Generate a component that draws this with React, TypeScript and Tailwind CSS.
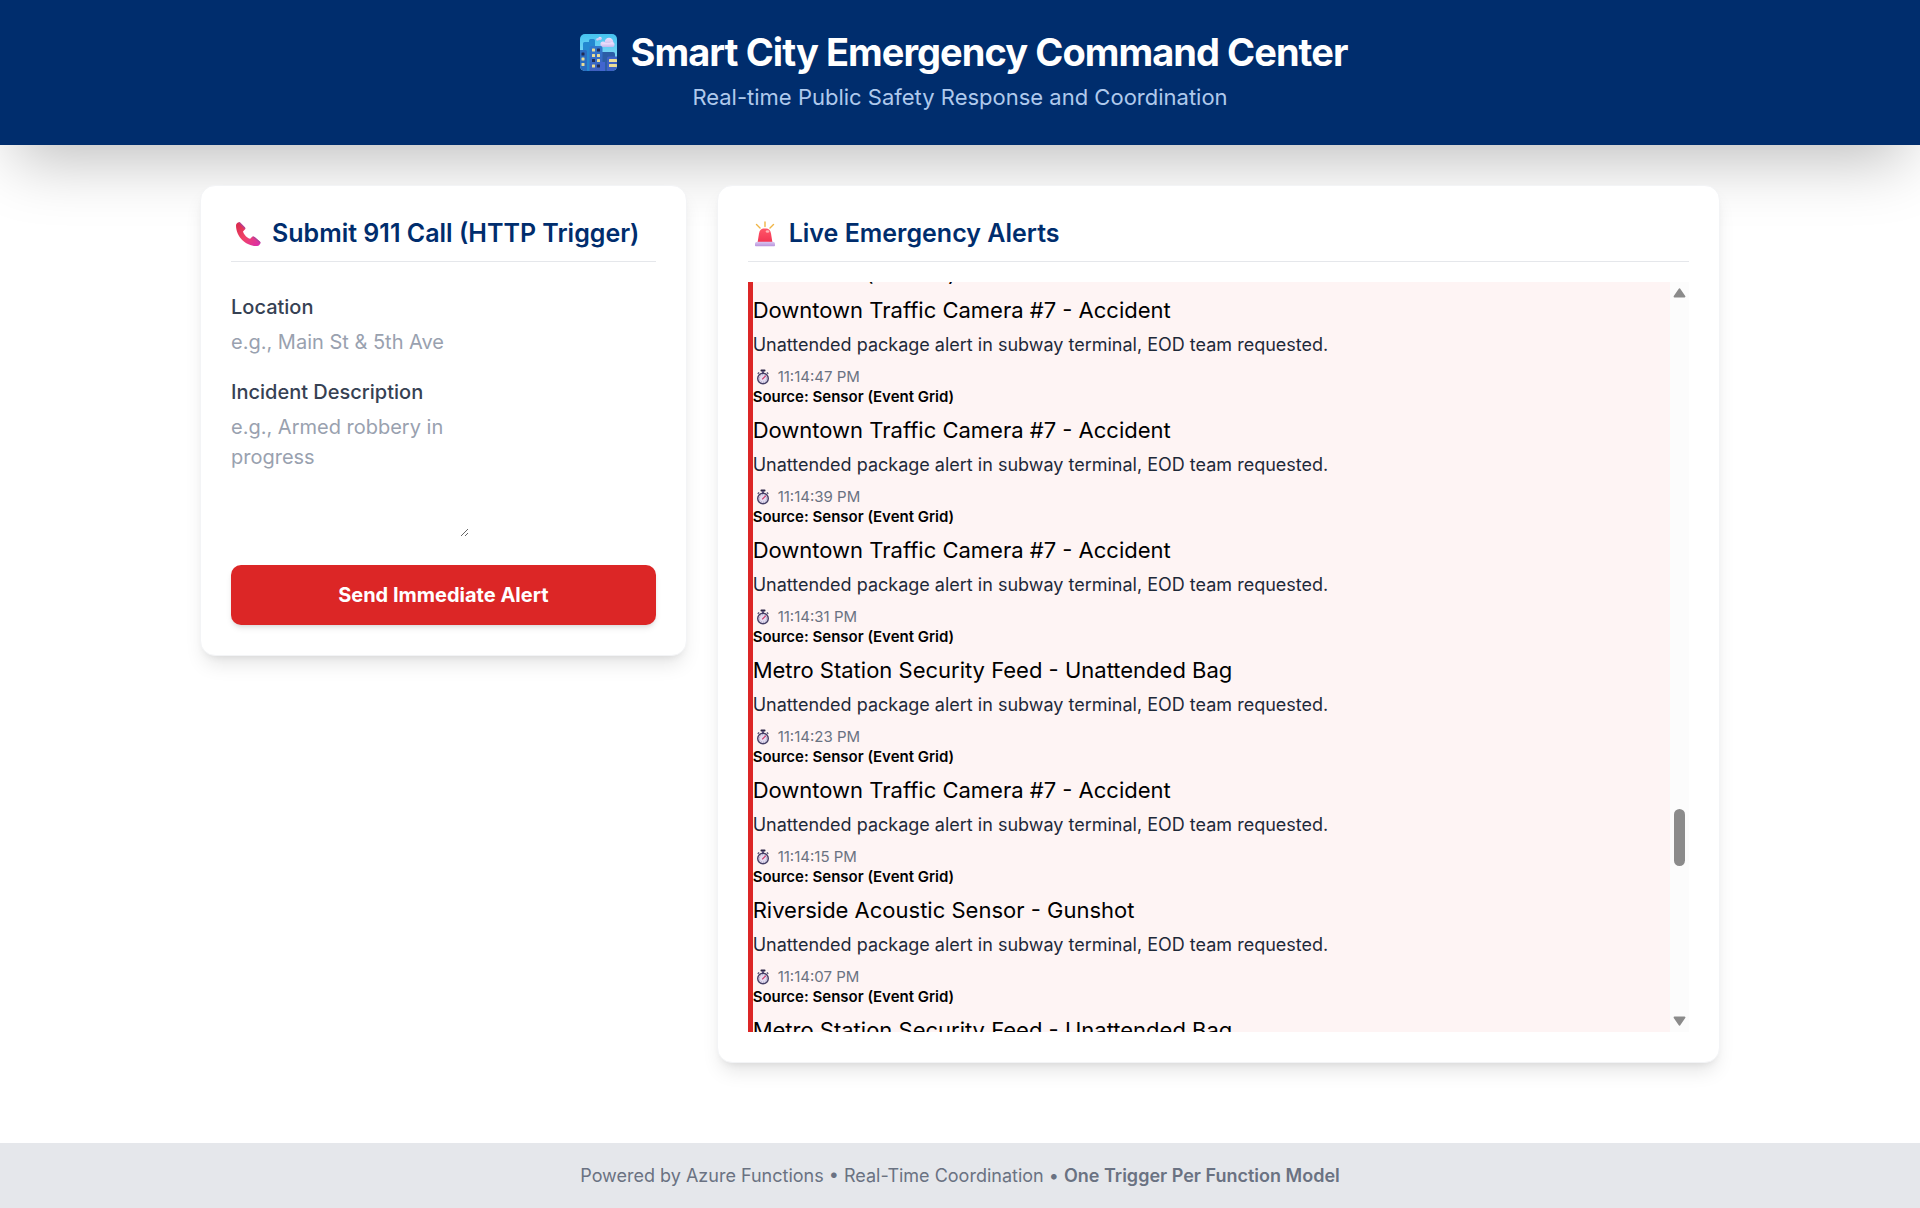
import React, { useLayoutEffect, useRef, useState } from 'react';

interface Alert {
  title: string;
  description: string;
  time: string;
  source: string;
}

const PACKAGE_ALERT = 'Unattended package alert in subway terminal, EOD team requested.';
const SENSOR = 'Sensor (Event Grid)';

const alerts: Alert[] = [
  { title: 'Downtown Traffic Camera #7 - Accident', description: PACKAGE_ALERT, time: '11:14:47 PM', source: SENSOR },
  { title: 'Downtown Traffic Camera #7 - Accident', description: PACKAGE_ALERT, time: '11:14:39 PM', source: SENSOR },
  { title: 'Downtown Traffic Camera #7 - Accident', description: PACKAGE_ALERT, time: '11:14:31 PM', source: SENSOR },
  { title: 'Metro Station Security Feed - Unattended Bag', description: PACKAGE_ALERT, time: '11:14:23 PM', source: SENSOR },
  { title: 'Downtown Traffic Camera #7 - Accident', description: PACKAGE_ALERT, time: '11:14:15 PM', source: SENSOR },
  { title: 'Riverside Acoustic Sensor - Gunshot', description: PACKAGE_ALERT, time: '11:14:07 PM', source: SENSOR },
  { title: 'Metro Station Security Feed - Unattended Bag', description: PACKAGE_ALERT, time: '11:13:59 PM', source: SENSOR },
];

function CityIcon() {
  return (
    <svg viewBox="0 0 37 37" className="w-[37px] h-[37px] shrink-0" aria-hidden="true">
      <defs>
        <linearGradient id="sky" x1="0" y1="0" x2="0" y2="1">
          <stop offset="0" stopColor="#45c3f0" />
          <stop offset="1" stopColor="#a5e4f8" />
        </linearGradient>
        <linearGradient id="tower" x1="0" y1="0" x2="0" y2="1">
          <stop offset="0" stopColor="#2f78cc" />
          <stop offset="1" stopColor="#3f5fc0" />
        </linearGradient>
        <linearGradient id="cloud" x1="0" y1="0" x2="0" y2="1">
          <stop offset="0" stopColor="#f0e0fc" />
          <stop offset="1" stopColor="#c3b8ec" />
        </linearGradient>
        <clipPath id="frame"><rect width="37" height="37" rx="5" /></clipPath>
      </defs>
      <g clipPath="url(#frame)">
        <rect width="37" height="37" fill="url(#sky)" />
        <g fill="url(#cloud)">
          <circle cx="29" cy="8" r="4.300" />
          <circle cx="23" cy="10" r="2.600" />
          <circle cx="32" cy="10.500" r="2.500" />
          <rect x="21" y="9" width="13" height="4" rx="2" />
          <circle cx="20" cy="4.500" r="1.800" />
          <circle cx="17.500" cy="5.500" r="1.300" />
        </g>
        <path d="M3 37V9.500a1.500 1.500 0 0 1 1.500-1.500H9V6.500A1.500 1.500 0 0 1 10.500 5h3A1.500 1.500 0 0 1 15 6.500V37z" fill="#2488d0" />
        <path d="M20 37V20a2 2 0 0 1 2-2h11a2 2 0 0 1 2 2v17z" fill="#2c5da6" />
        <path d="M0 16h5.500A1.500 1.500 0 0 1 7 17.500V37H0z" fill="#2a6cc0" />
        <path d="M9.500 37V14a2 2 0 0 1 2-2h9a2 2 0 0 1 2 2v23z" fill="url(#tower)" />
        <path d="M20 28h5v9h-5z" fill="#4165cf" />
        <path d="M27 24a1.500 1.500 0 0 1 1.500-1.500H37V37H27z" fill="#3d62c5" />
        <g fill="#e9dc96">
          <rect x="12" y="14.500" width="3" height="3" rx=".5" />
          <rect x="17" y="20" width="3" height="3" rx=".5" />
          <rect x="12" y="20" width="3" height="3" rx=".5" />
          <rect x="17" y="25" width="3" height="3" rx=".5" />
          <rect x="12" y="30.500" width="3" height="3" rx=".5" />
          <rect x="1.500" y="23.500" width="3" height="3" rx=".5" />
          <rect x="1.500" y="29" width="3" height="3" rx=".5" />
          <rect x="29" y="25" width="8" height="3" rx=".5" />
          <rect x="29" y="30" width="8" height="3" rx=".5" />
        </g>
        <g fill="#202b56">
          <rect x="17" y="14.500" width="3" height="3" rx=".5" />
          <rect x="12" y="25" width="3" height="3" rx=".5" />
          <rect x="17" y="30.500" width="3" height="3" rx=".5" />
          <rect x="1.500" y="18.500" width="3" height="3" rx=".5" />
        </g>
      </g>
    </svg>
  );
}

function PhoneIcon() {
  return (
    <svg viewBox="0 0 26 26" className="w-[26px] h-[26px] shrink-0" aria-hidden="true">
      <defs>
        <linearGradient id="handset" x1="0" y1="0" x2="1" y2="1">
          <stop offset="0" stopColor="#d8284a" />
          <stop offset=".5" stopColor="#f04468" />
          <stop offset="1" stopColor="#d92bb0" />
        </linearGradient>
      </defs>
      <path
        d="M1 4.500C1 2.500 3 .8 4.800 1.300l5 4.900c.8.900.6 1.800-.2 2.600L8 10.400c.6 2.900 4.200 6.500 7.200 7.300l1.700-1.600c.8-.8 1.900-.8 2.700 0l5.500 4.700c.9 1-.3 4-3.100 4.200C11.500 25.600 1 16 1 4.500z"
        fill="url(#handset)"
      />
      <path d="M4.800 1.300l5 4.900c.6.700.6 1.400.2 2L3.700 1.800c.2-.4.6-.6 1.100-.5zM16.900 16.100c.8-.8 1.900-.8 2.700 0l5.500 4.700c.4.400.4 1.100.1 1.800l-7.700-6.700z" fill="#b0459b" />
    </svg>
  );
}

function SirenIcon() {
  return (
    <svg viewBox="0 0 22 26" className="w-[22px] h-[26px] shrink-0" aria-hidden="true">
      <defs>
        <linearGradient id="lamp" x1="0" y1="0" x2="0" y2="1">
          <stop offset="0" stopColor="#ff5668" />
          <stop offset="1" stopColor="#f23352" />
        </linearGradient>
        <linearGradient id="base" x1="0" y1="0" x2="0" y2="1">
          <stop offset="0" stopColor="#d9c6f0" />
          <stop offset="1" stopColor="#b894dc" />
        </linearGradient>
      </defs>
      <path d="M11 1v4.500M2.500 3.500l3.500 3.500M19.500 3.500L16 7" stroke="#f0b545" strokeWidth="1.400" strokeLinecap="round" />
      <path d="M3.500 22l1.500-9.500c.5-3.200 2.500-5 4.800-5h2.400c2.300 0 4.300 1.800 4.800 5l1.500 9.500z" fill="url(#lamp)" />
      <ellipse cx="13.500" cy="10.500" rx="1.800" ry="1.300" fill="#ffb3b8" />
      <path d="M1 23c0-1.400 1-2.200 2.500-2.200h15c1.500 0 2.500.8 2.500 2.200v1.500a.8.800 0 0 1-.8.800H1.800a.8.800 0 0 1-.8-.8z" fill="url(#base)" />
    </svg>
  );
}

function StopwatchIcon() {
  return (
    <svg viewBox="0 0 14 16" className="w-[14px] h-[16px] shrink-0" aria-hidden="true">
      <rect x="4.500" y="0.500" width="5" height="2" rx=".8" fill="#2f2948" />
      <rect x="6" y="2" width="2" height="2" fill="#5d5280" />
      <path d="M10.800 3.500l1.500 1.300M3.200 3.500L1.700 4.800" stroke="#51496f" strokeWidth="1.200" />
      <circle cx="7" cy="9.500" r="5.300" fill="#e4ddf2" stroke="#463f66" strokeWidth="1.400" />
      <circle cx="7" cy="9.500" r="3.700" fill="none" stroke="#8a80aa" strokeWidth=".8" strokeDasharray="1 1.300" />
      <path d="M6.500 10l3-3" stroke="#d0406f" strokeWidth="1.100" strokeLinecap="round" />
    </svg>
  );
}

function AlertSource({ source }: { source: string }) {
  return <p className="text-[15px] leading-[20px] font-semibold text-black">Source: {source}</p>;
}

function AlertItem({ alert }: { alert: Alert }) {
  return (
    <li className="pt-[1px] pb-[5px] border-l-[5px] border-[#dc2626] bg-[#fef4f4]">
      <h3 className="text-[22px] leading-[35px] text-black">{alert.title}</h3>
      <p className="mt-[4px] text-[18px] leading-[25px] text-gray-800">{alert.description}</p>
      <p className="mt-[10px] pl-[3px] flex items-center gap-[8px] text-[15px] leading-[20px] text-gray-500">
        <StopwatchIcon />
        <span>{alert.time}</span>
      </p>
      <AlertSource source={alert.source} />
    </li>
  );
}

function ScrollTrack() {
  return (
    <div className="w-[19px] shrink-0 py-[6px] flex flex-col items-center bg-[#fcfcfc]" aria-hidden="true">
      <svg viewBox="0 0 13 10" className="w-[13px] h-[10px]">
        <path d="M6.500 1.200L11.500 8.500H1.500z" fill="#8b8b8b" stroke="#8b8b8b" strokeWidth="1.800" strokeLinejoin="round" />
      </svg>
      <div className="grow-[511]" />
      <div className="w-[11px] h-[57px] rounded-full bg-[#8b8b8b]" />
      <div className="grow-[150]" />
      <svg viewBox="0 0 13 10" className="w-[13px] h-[10px]">
        <path d="M6.500 8.800L11.500 1.500H1.500z" fill="#8b8b8b" stroke="#8b8b8b" strokeWidth="1.800" strokeLinejoin="round" />
      </svg>
    </div>
  );
}

function CallForm() {
  const [location, setLocation] = useState('');
  const [description, setDescription] = useState('');

  return (
    <form className="mt-[30px] flex flex-col text-[20px] leading-[30px]" onSubmit={(e) => e.preventDefault()}>
      <label htmlFor="location" className="font-medium text-gray-700">Location</label>
      <input
        id="location"
        type="text"
        value={location}
        onChange={(e) => setLocation(e.target.value)}
        placeholder="e.g., Main St & 5th Ave"
        className="mt-[5px] w-[238px] h-[30px] placeholder:text-gray-400 focus:outline-none"
      />
      <label htmlFor="description" className="mt-[20px] font-medium text-gray-700">Incident Description</label>
      <textarea
        id="description"
        value={description}
        onChange={(e) => setDescription(e.target.value)}
        placeholder="e.g., Armed robbery in progress"
        className="mt-[5px] w-[238px] h-[125px] resize placeholder:text-gray-400 focus:outline-none"
      />
      <button
        type="submit"
        className="mt-[28px] w-full h-[60px] rounded-[10px] bg-[#dc2626] hover:bg-[#b91c1c] text-white font-bold shadow-md"
      >
        Send Immediate Alert
      </button>
    </form>
  );
}

export default function App() {
  const listRef = useRef<HTMLUListElement>(null);

  // The feed opens on the last line of the previous alert
  useLayoutEffect(() => {
    if (listRef.current) listRef.current.scrollTop = 15;
  }, []);

  return (
    <div className="min-h-screen flex flex-col bg-white font-['Inter',sans-serif]">
      <header className="py-[30px] flex flex-col items-center bg-[#002d6d] shadow-[0_31px_62px_-15px_rgba(0,0,0,0.25)]">
        <h1 className="pl-[7px] flex items-center gap-[14px] text-[38px] leading-[45px] font-bold tracking-tight text-white">
          <CityIcon />
          <span>Smart City Emergency Command Center</span>
        </h1>
        <p className="mt-[5px] text-[22px] leading-[35px] text-[#afc9ec]">
          Real-time Public Safety Response and Coordination
        </p>
      </header>

      <main className="grow w-full max-w-[1600px] mx-auto p-[40px] grid grid-cols-3 gap-[30px] items-start">
        <section className="relative p-[30px] rounded-[15px] border border-gray-100 bg-white shadow-[0_12px_19px_-4px_rgba(0,0,0,0.1),0_5px_8px_-5px_rgba(0,0,0,0.1)]">
          <h2 className="pb-[10px] pl-[4px] flex items-center gap-[11px] border-b border-gray-200 text-[25px] leading-[35px] font-semibold text-[#002d6d]">
            <PhoneIcon />
            <span>Submit 911 Call (HTTP Trigger)</span>
          </h2>
          <CallForm />
        </section>

        <section className="relative col-span-2 p-[30px] rounded-[15px] border border-gray-100 bg-white shadow-[0_12px_19px_-4px_rgba(0,0,0,0.1),0_5px_8px_-5px_rgba(0,0,0,0.1)]">
          <h2 className="pb-[10px] pl-[6px] flex items-center gap-[13px] border-b border-gray-200 text-[25px] leading-[35px] font-semibold text-[#002d6d]">
            <SirenIcon />
            <span>Live Emergency Alerts</span>
          </h2>
          <div className="mt-[20px] h-[750px] flex">
            <ul ref={listRef} className="grow overflow-y-auto [scrollbar-width:none]">
              <li className="pb-[5px] border-l-[5px] border-[#dc2626] bg-[#fef4f4]">
                <AlertSource source={SENSOR} />
              </li>
              {alerts.map((alert) => (
                <AlertItem key={alert.time} alert={alert} />
              ))}
            </ul>
            <ScrollTrack />
          </div>
        </section>
      </main>

      <footer className="mt-[40px] py-[20px] bg-gray-200 text-center text-[18px] leading-[25px] text-gray-500">
        Powered by Azure Functions • Real-Time Coordination • <span className="font-semibold">One Trigger Per Function Model</span>
      </footer>
    </div>
  );
}
